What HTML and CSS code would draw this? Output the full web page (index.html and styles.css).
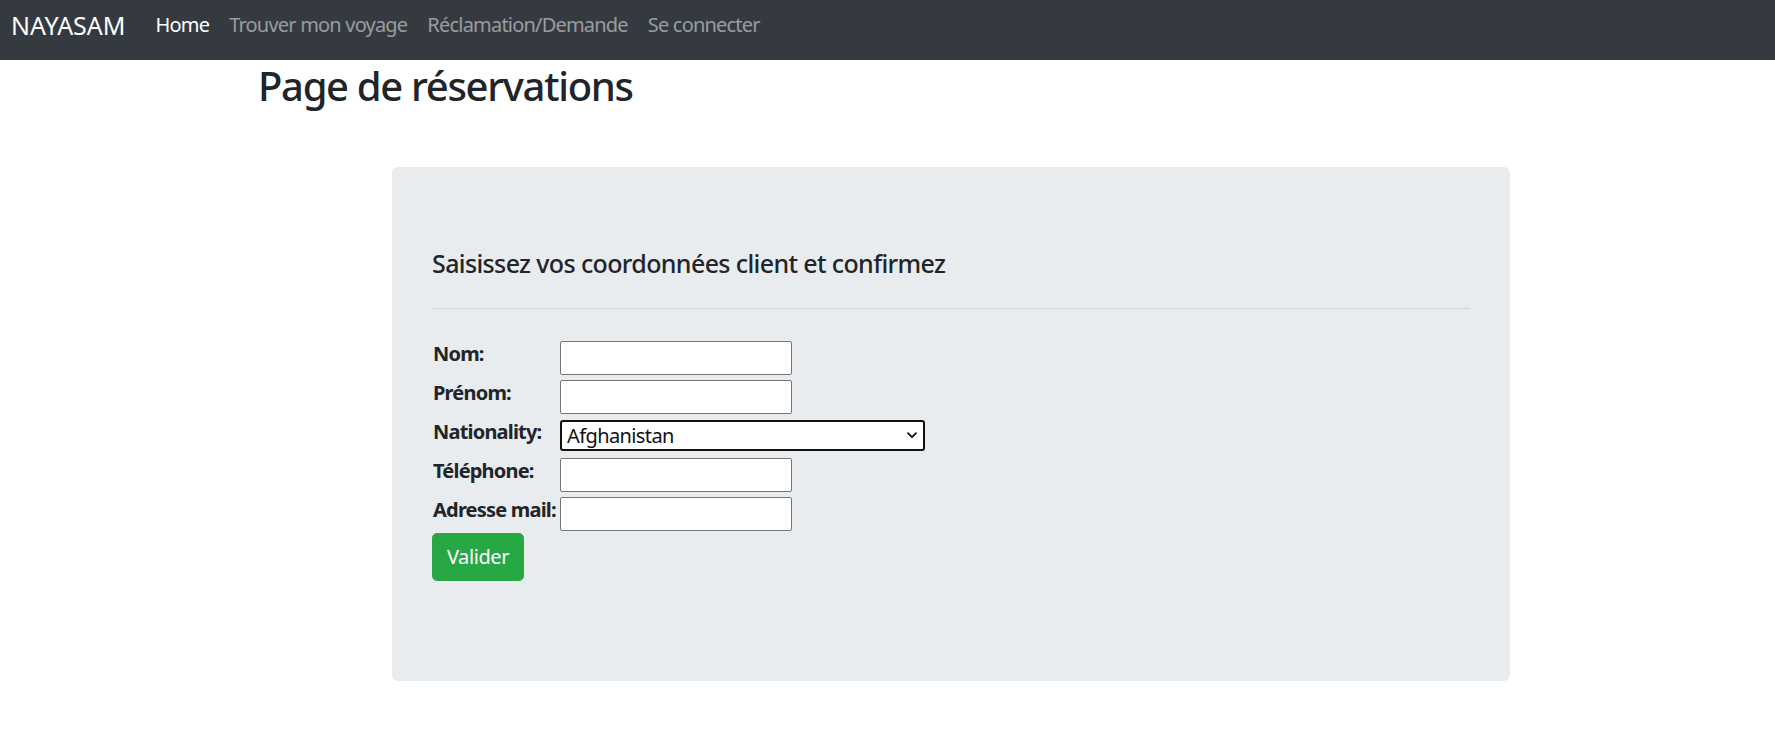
FILE: index.html
```html
<!DOCTYPE html>
<html lang="fr">
<head>
<meta charset="utf-8">
<title>Page de réservations</title>
<link rel="stylesheet" href="styles.css">
</head>
<body>
<nav class="navbar">
  <a class="brand" href="#">NAYASAM</a>
  <ul class="nav">
    <li><a class="nav-link active" href="#">Home</a></li>
    <li><a class="nav-link" href="#">Trouver mon voyage</a></li>
    <li><a class="nav-link" href="#">Réclamation/Demande</a></li>
    <li><a class="nav-link" href="#">Se connecter</a></li>
  </ul>
</nav>
<main class="page">
  <h2 class="page-title">Page de réservations</h2>
  <section class="jumbotron">
    <h5 class="lead-title">Saisissez vos coordonnées client et confirmez</h5>
    <hr class="sep">
    <form class="client-form">
      <div class="row">
        <label class="lbl" for="nom">Nom:</label>
        <input class="txt" id="nom" type="text">
      </div>
      <div class="row">
        <label class="lbl" for="prenom">Prénom:</label>
        <input class="txt" id="prenom" type="text">
      </div>
      <div class="row">
        <label class="lbl" for="nat">Nationality:</label>
        <div class="select-wrap">
          <select class="sel" id="nat">
            <option>Afghanistan</option>
            <option>Albania</option>
            <option>Algeria</option>
          </select>
          <svg class="chev" width="10" height="7" viewBox="0 0 10 7"><path d="M1 1.2 L5 5.2 L9 1.2" fill="none" stroke="#111" stroke-width="1.8" stroke-linecap="round" stroke-linejoin="round"/></svg>
        </div>
      </div>
      <div class="row">
        <label class="lbl" for="tel">Téléphone:</label>
        <input class="txt" id="tel" type="text">
      </div>
      <div class="row">
        <label class="lbl" for="mail">Adresse mail:</label>
        <input class="txt" id="mail" type="text">
      </div>
      <button class="btn-valider" type="button">Valider</button>
    </form>
  </section>
</main>
</body>
</html>
```
FILE: styles.css
```css
* { box-sizing: border-box; }
html, body { margin: 0; padding: 0; }
body {
  font-family: "Noto Sans", "Open Sans", sans-serif;
  color: #212529;
  background: #fff;
  font-size: 20px;
  line-height: 30px;
  letter-spacing: -0.03em;
}
.navbar {
  display: flex;
  align-items: flex-start;
  height: 60px;
  background: #343a40;
  padding: 0 10px 0 11px;
}
.brand {
  color: #fff;
  text-decoration: none;
  font-size: 25px;
  line-height: 37px;
  padding-top: 7px;
  margin-right: 20px;
  letter-spacing: 0;
}
.nav {
  list-style: none;
  margin: 0;
  padding: 0;
  display: flex;
}
.nav-link {
  display: block;
  padding: 10px 10px 0;
  color: rgba(255,255,255,.5);
  text-decoration: none;
  font-size: 20px;
  line-height: 30px;
  letter-spacing: -0.04em;
}
.nav-link.active { color: #fff; }
.page { padding: 0; }
.page-title {
  margin: 0 0 0 258px;
  padding-top: 2px;
  font-size: 40px;
  line-height: 48px;
  font-weight: 500;
  letter-spacing: -0.033em;
}
.jumbotron {
  margin: 57px 0 0 392px;
  width: 1118px;
  background: #e9ecef;
  border-radius: 6px;
  padding: 81px 40px 80px;
}
.lead-title {
  margin: 0 0 10px;
  font-size: 25px;
  line-height: 30px;
  font-weight: 500;
  letter-spacing: -0.025em;
}
.sep {
  margin: 30px 0 20px;
  border: 0;
  border-top: 1px solid rgba(0,0,0,.1);
}
.client-form {
  padding-top: 9px;
  margin-bottom: 20px;
}
.row {
  display: flex;
  align-items: center;
  height: 39px;
}
.lbl {
  flex: 0 0 128px;
  width: 128px;
  font-weight: 700;
  font-size: 20px;
  line-height: 30px;
  padding-bottom: 7px;
  padding-left: 1px;
  white-space: nowrap;
  letter-spacing: -0.04em;
}
.txt {
  width: 232px;
  height: 34px;
  border: 1px solid #767676;
  border-radius: 2px;
  background: #fff;
  margin: 0;
  padding: 1px 3px;
  font-family: inherit;
  font-size: 20px;
}
.select-wrap {
  position: relative;
  width: 365px;
  height: 31px;
}
.sel {
  appearance: none;
  -webkit-appearance: none;
  width: 100%;
  height: 100%;
  margin: 0;
  border: 2px solid #111;
  border-radius: 3px;
  background: #fff;
  color: #111;
  font-family: inherit;
  font-size: 20px;
  line-height: 26px;
  letter-spacing: -0.03em;
  padding: 0 20px 0 5px;
}
.chev {
  position: absolute;
  right: 8px;
  top: 12px;
  pointer-events: none;
}
.btn-valider {
  display: block;
  margin-top: 0;
  width: 92px;
  height: 48px;
  border: 1px solid #28a745;
  background: #28a745;
  color: #fff;
  border-radius: 5px;
  font-family: inherit;
  font-size: 20px;
  line-height: 30px;
  letter-spacing: -0.02em;
  padding: 0;
}
```
